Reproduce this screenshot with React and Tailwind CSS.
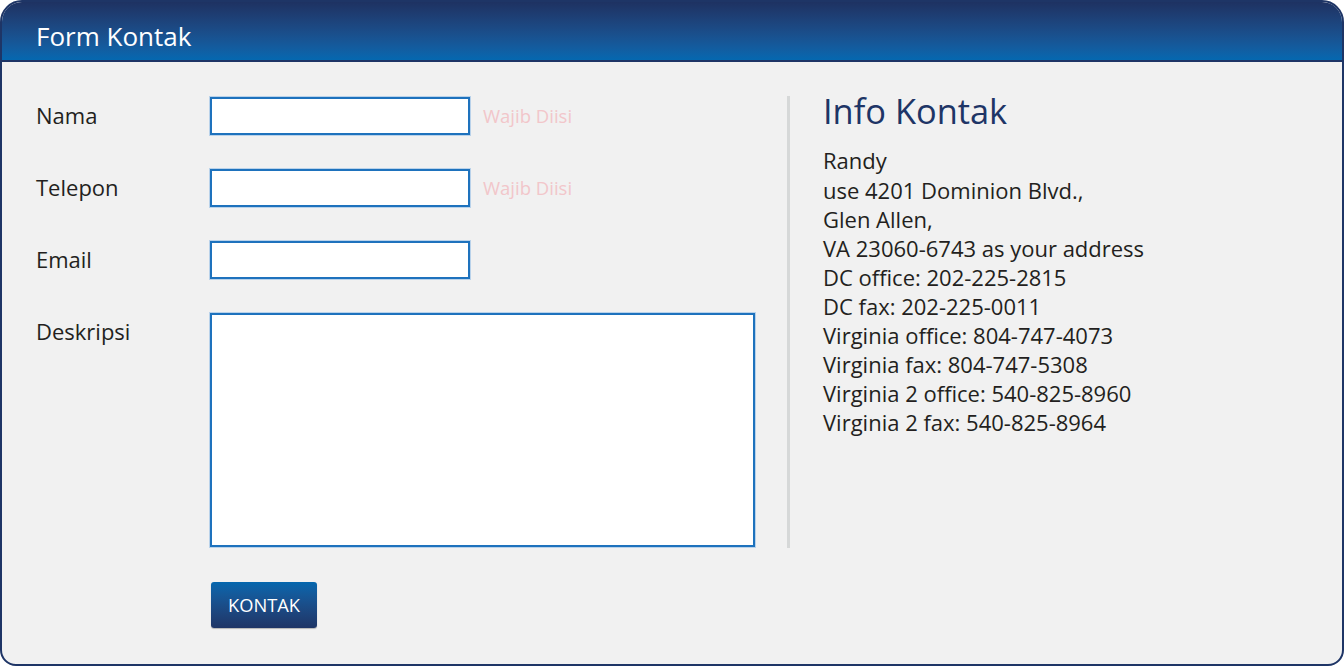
export default function App() {
  const font = { fontFamily: '"Open Sans", "Liberation Sans", sans-serif' };
  const lines = [
    "Randy",
    "use 4201 Dominion Blvd.,",
    "Glen Allen,",
    "VA 23060-6743 as your address",
    "DC office: 202-225-2815",
    "DC fax: 202-225-0011",
    "Virginia office: 804-747-4073",
    "Virginia fax: 804-747-5308",
    "Virginia 2 office: 540-825-8960",
    "Virginia 2 fax: 540-825-8964",
  ];
  const inputCls =
    "w-[260px] h-[38px] bg-white border-2 border-[#1e72bd] shadow-[0_0_0_1px_#b9d2ea] outline-none";
  return (
    <div style={font} className="w-[1344px] h-[666px] flex flex-col rounded-t-[22px] rounded-b-[16px] border-2 border-[#1e3566] bg-[#f1f1f1] overflow-hidden">
      <div className="h-[60px] shrink-0 border-b-2 border-[#1e3566] bg-gradient-to-b from-[#1e3262] to-[#0468b0] pl-[34px] pt-[10px] flex items-center">
        <span className="text-white text-[26px] leading-none">Form Kontak</span>
      </div>
      <div className="flex pt-[35px]">
        <div className="w-[753px] shrink-0 pl-[34px] flex flex-col">
          <div className="flex flex-col gap-[34px]">
            <div className="flex items-start">
              <div className="w-[174px] h-[37px] flex items-center text-[22px] text-[#231f20]">Nama</div>
              <div className={inputCls} />
              <div className="h-[38px] flex items-center ml-[13px] text-[18.5px] text-[#f2c6ca]">Wajib Diisi</div>
            </div>
            <div className="flex items-start">
              <div className="w-[174px] h-[37px] flex items-center text-[22px] text-[#231f20]">Telepon</div>
              <div className={inputCls} />
              <div className="h-[38px] flex items-center ml-[13px] text-[18.5px] text-[#f2c6ca]">Wajib Diisi</div>
            </div>
            <div className="flex items-start">
              <div className="w-[174px] h-[37px] flex items-center text-[22px] text-[#231f20]">Email</div>
              <div className={inputCls} />
            </div>
            <div className="flex items-start">
              <div className="w-[174px] h-[37px] flex items-center text-[22px] text-[#231f20]">Deskripsi</div>
              <div className="w-[546px] h-[234px] bg-white border-2 border-[#1e72bd] shadow-[0_0_0_1px_#b9d2ea]" />
            </div>
          </div>
          <div className="pl-[175px] mt-[35px]">
            <button className="w-[106px] h-[46px] rounded-[3px] bg-gradient-to-b from-[#0467ae] to-[#1e3566] text-white text-[18.3px] flex items-center justify-center shadow-[0_1px_1px_rgba(0,0,0,0.25)]">
              KONTAK
            </button>
          </div>
        </div>
        <div className="w-[3px] h-[452px] mt-[-1px] bg-[#d6d8d8] shrink-0 ml-[32px]" />
        <div className="ml-[33px] flex flex-col">
          <div className="text-[34.4px] leading-none text-[#1e3566] mt-[-3px]">Info Kontak</div>
          <div className="mt-[18px] text-[22px] leading-[29.1px] text-[#231f20]">
            {lines.map((l) => (
              <div key={l}>{l}</div>
            ))}
          </div>
        </div>
      </div>
    </div>
  );
}
